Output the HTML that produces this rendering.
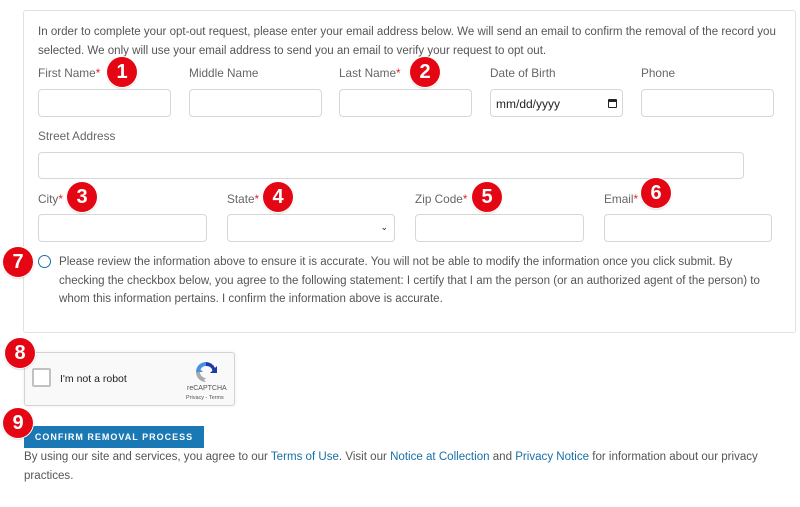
<!DOCTYPE html>
<html><head><meta charset="utf-8"><style>
*{box-sizing:border-box;margin:0;padding:0}
body{width:800px;height:507px;background:#fff;font-family:"Liberation Sans",sans-serif;color:#555;font-size:11.55px;position:relative;overflow:hidden}
.a{position:absolute}
.box{left:23px;top:10px;width:773px;height:323px;border:1px solid #e2e2e2;border-radius:3px}
.t{left:38px;font-size:11.55px;line-height:19px;color:#555;white-space:nowrap}
.lbl{font-size:11.8px;color:#666;white-space:nowrap}
.lbl b{color:#e0262b;font-weight:normal}
.in{border:1px solid #d7d7d7;border-radius:4px;background:#fff}
.badge{width:30px;height:30px;border-radius:50%;background:#e40613;color:#fff;font-weight:bold;font-size:20px;text-align:center;line-height:30px;box-shadow:0 0 0 1px #fff,0 1px 2px rgba(0,0,0,.3)}
a{color:#1a6fa8;text-decoration:none}
</style></head><body>
<div class="a box"></div>
<div class="a t" style="top:23px">In order to complete your opt-out request, please enter your email address below. We will send an email to confirm the removal of the record you</div>
<div class="a t" style="top:42px">selected. We only will use your email address to send you an email to verify your request to opt out.</div>

<div class="a lbl" style="left:38px;top:66px">First Name<b>*</b></div>
<div class="a lbl" style="left:189px;top:66px">Middle Name</div>
<div class="a lbl" style="left:339px;top:66px">Last Name<b>*</b></div>
<div class="a lbl" style="left:490px;top:66px">Date of Birth</div>
<div class="a lbl" style="left:641px;top:66px">Phone</div>
<div class="a in" style="left:38px;top:89px;width:133px;height:28px"></div>
<div class="a in" style="left:189px;top:89px;width:133px;height:28px"></div>
<div class="a in" style="left:339px;top:89px;width:133px;height:28px"></div>
<div class="a in" style="left:490px;top:89px;width:133px;height:28px;font-size:12px;color:#222;padding:7px 0 0 5px">mm/dd/yyyy<span style="position:absolute;right:5px;top:9px;width:9px;height:9px;border:1.5px solid #222;border-top-width:3px;border-radius:1px"></span></div>
<div class="a in" style="left:641px;top:89px;width:133px;height:28px"></div>

<div class="a lbl" style="left:38px;top:129px">Street Address</div>
<div class="a in" style="left:38px;top:152px;width:706px;height:27px"></div>

<div class="a lbl" style="left:38px;top:192px">City<b>*</b></div>
<div class="a lbl" style="left:227px;top:192px">State<b>*</b></div>
<div class="a lbl" style="left:415px;top:192px">Zip Code<b>*</b></div>
<div class="a lbl" style="left:604px;top:192px">Email<b>*</b></div>
<div class="a in" style="left:38px;top:214px;width:169px;height:28px"></div>
<div class="a in" style="left:227px;top:214px;width:168px;height:28px"><span style="position:absolute;right:6px;top:7px;font-size:9px;color:#222">&#8964;</span></div>
<div class="a in" style="left:415px;top:214px;width:169px;height:28px"></div>
<div class="a in" style="left:604px;top:214px;width:168px;height:28px"></div>

<div class="a" style="left:38px;top:255px;width:13px;height:13px;border:1.5px solid #1a6fa8;border-radius:50%"></div>
<div class="a t" style="left:59px;top:253px;line-height:18.5px">Please review the information above to ensure it is accurate. You will not be able to modify the information once you click submit. By<br>checking the checkbox below, you agree to the following statement: I certify that I am the person (or an authorized agent of the person) to<br>whom this information pertains. I confirm the information above is accurate.</div>

<div class="a" style="left:24px;top:352px;width:211px;height:54px;border:1px solid #d3d3d3;border-radius:3px;background:#f9f9f9;box-shadow:0 0 3px rgba(0,0,0,.08)"></div>
<div class="a" style="left:32px;top:368px;width:19px;height:19px;border:2px solid #c1c1c1;border-radius:2px;background:#fff"></div>
<div class="a" style="left:60px;top:373px;font-size:10.5px;color:#222">I'm not a robot</div>
<svg class="a" style="left:194px;top:360px" width="24" height="24" viewBox="0 0 24 24"><path d="M12 2a10 10 0 0 1 9 6l2-2v7h-7l2.5-2.5A6 6 0 0 0 12 6z" fill="#1c3aa9"/><path d="M2 12A10 10 0 0 1 12 2v4a6 6 0 0 0-5.5 3.5L9 12H2z" fill="#4a90e2"/><path d="M12 22A10 10 0 0 1 2 12h4a6 6 0 0 0 6 6l-2 2 2 2z" fill="#aaa"/></svg>
<div class="a" style="left:187px;top:385px;font-size:7px;color:#555">reCAPTCHA</div>
<div class="a" style="left:186px;top:395px;font-size:5.5px;color:#555">Privacy - Terms</div>

<div class="a" style="left:24px;top:426px;width:180px;height:22px;background:#1a78b4;color:#fff;font-weight:bold;font-size:9px;letter-spacing:1px;text-align:center;line-height:22px">CONFIRM REMOVAL PROCESS</div>
<div class="a t" style="left:24px;top:448px;line-height:19px">By using our site and services, you agree to our <a>Terms of Use</a>. Visit our <a>Notice at Collection</a> and <a>Privacy Notice</a> for information about our privacy<br>practices.</div>

<div class="a badge" style="left:107px;top:57px">1</div>
<div class="a badge" style="left:410px;top:57px">2</div>
<div class="a badge" style="left:67px;top:182px">3</div>
<div class="a badge" style="left:263px;top:182px">4</div>
<div class="a badge" style="left:472px;top:182px">5</div>
<div class="a badge" style="left:641px;top:178px">6</div>
<div class="a badge" style="left:3px;top:247px">7</div>
<div class="a badge" style="left:5px;top:338px">8</div>
<div class="a badge" style="left:3px;top:408px">9</div>
</body></html>
